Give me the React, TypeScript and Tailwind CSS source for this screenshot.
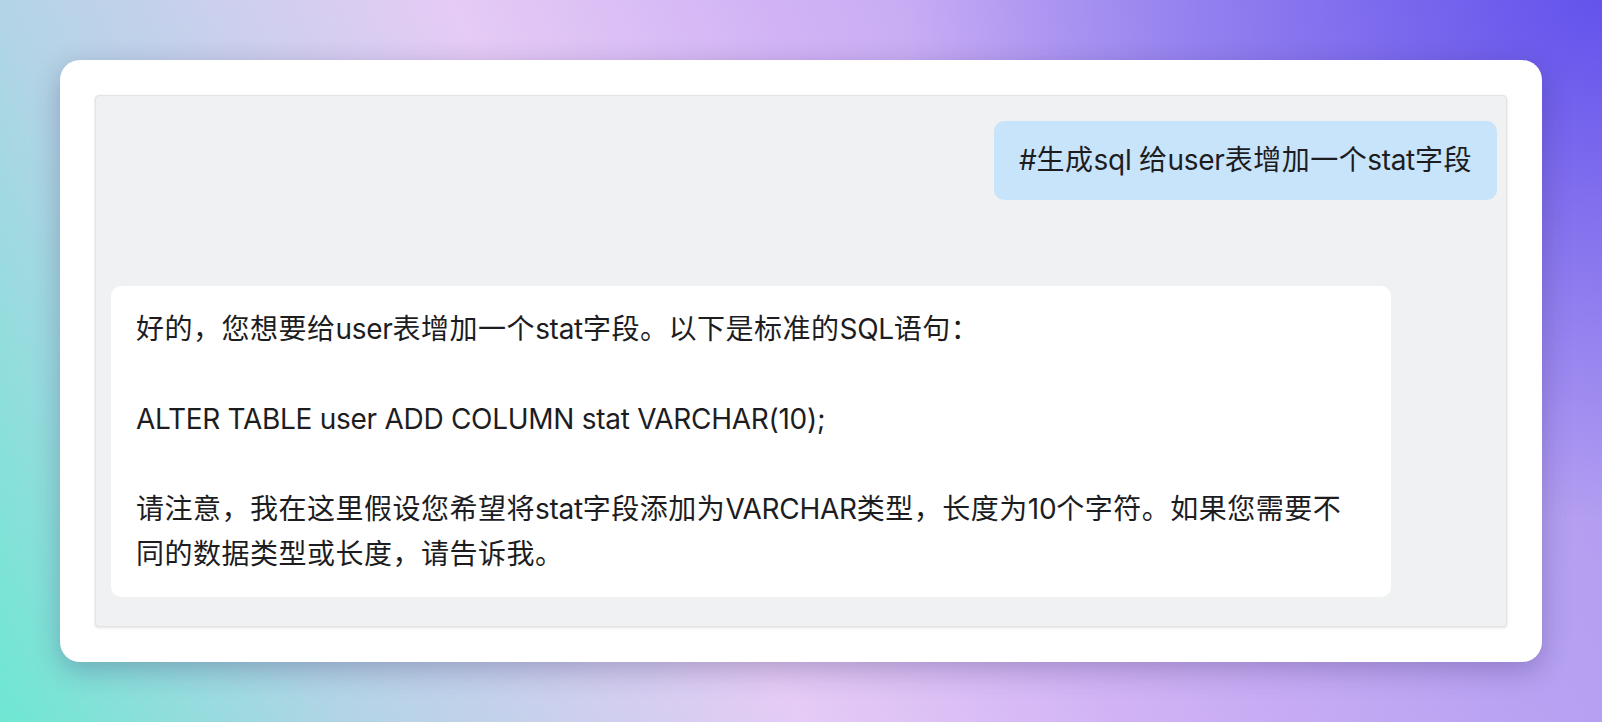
import React from "react";

const answer =
  "好的，您想要给user表增加一个stat字段。以下是标准的SQL语句：\n\nALTER TABLE user ADD COLUMN stat VARCHAR(10);\n\n请注意，我在这里假设您希望将stat字段添加为VARCHAR类型，长度为10个字符。如果您需要不同的数据类型或长度，请告诉我。";

const SPLIT = /([\u3000-\u303f\uff00-\uffef\u4e00-\u9fff]+)/;

function Mixed({ text }: { text: string }) {
  const parts = text.split(SPLIT).filter((p) => p !== "");
  return (
    <>
      {parts.map((p, i) =>
        SPLIT.test(p) ? (
          <span key={i} className="font-['Noto_Sans_CJK_SC',sans-serif] leading-[0] tracking-[0.5px]">
            {p}
          </span>
        ) : (
          <span key={i} className="tracking-[-0.01em]">
            {p}
          </span>
        )
      )}
    </>
  );
}

export default function App() {
  return (
    <div className="flex h-[722px] w-full p-[60px] font-['Inter','Noto_Sans_CJK_SC',sans-serif] bg-[radial-gradient(ellipse_700px_520px_at_100%_0%,rgba(99,83,236,1),rgba(99,83,236,0)),linear-gradient(64deg,#6ee7d3_0%,#b3d4e6_18%,#e5cbf5_41%,#d0b2f5_58%,#b8a2f2_78%,#ac98f0_100%)]">
      <div className="flex flex-1 rounded-[20px] bg-white p-[35px] shadow-[0_8px_28px_rgba(40,30,90,0.28)]">
        <div className="flex flex-1 flex-col rounded-[4px] border border-[#e2e3e6] bg-[#f0f1f3] pl-[15px] pr-[9px] pt-[25px] shadow-[0_1px_3px_rgba(0,0,0,0.12)]">
          <div className="self-end rounded-[10px] bg-[#c8e4fb] px-[25px] py-[17px] text-[28px] leading-[45px] text-[#1d1d1f]">
            <Mixed text="#生成sql 给user表增加一个stat字段" />
          </div>
          <div className="mt-[86px] w-[1280px] whitespace-pre-wrap rounded-[10px] bg-white px-[25px] pb-[20px] pt-[21px] text-[28px] leading-[45px] text-[#1d1d1f]">
            <Mixed text={answer} />
          </div>
        </div>
      </div>
    </div>
  );
}
